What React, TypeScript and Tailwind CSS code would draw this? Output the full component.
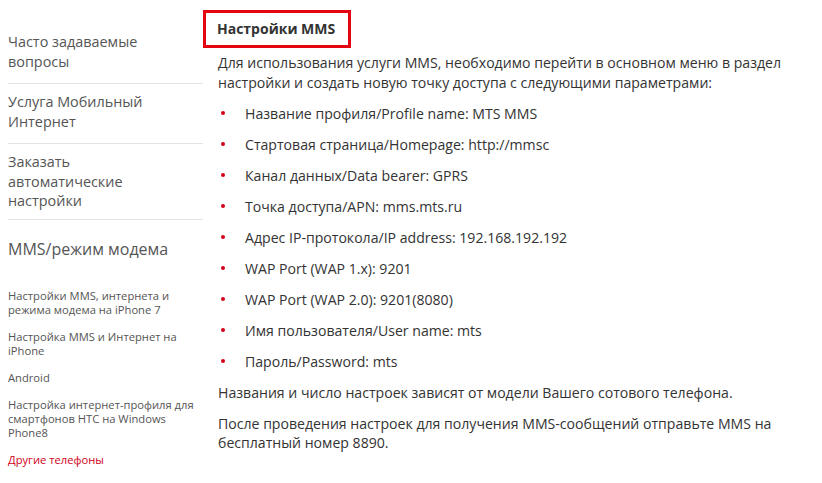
import React from 'react';

const sideItems = [
  ['Часто задаваемые', 'вопросы'],
  ['Услуга Мобильный', 'Интернет'],
  ['Заказать', 'автоматические', 'настройки'],
];

const subItems = [
  ['Настройки MMS, интернета и', 'режима модема на iPhone 7'],
  ['Настройка MMS и Интернет на', 'iPhone'],
  ['Android'],
  ['Настройка интернет-профиля для', 'смартфонов HTC на Windows', 'Phone8'],
];

const params = [
  'Название профиля/Profile name: MTS MMS',
  'Стартовая страница/Homepage: http://mmsc',
  'Канал данных/Data bearer: GPRS',
  'Точка доступа/APN: mms.mts.ru',
  'Адрес IP-протокола/IP address: 192.168.192.192',
  'WAP Port (WAP 1.x): 9201',
  'WAP Port (WAP 2.0): 9201(8080)',
  'Имя пользователя/User name: mts',
  'Пароль/Password: mts',
];

export default function App() {
  return (
    <div className="flex min-h-screen bg-white font-['Open_Sans','Noto_Sans',sans-serif] text-[#333]">
      <aside className="ml-2 w-[195px] shrink-0 pt-[24px] text-[14.4px] leading-[19.5px] text-[#555]">
        {sideItems.map((lines, i) => (
          <div
            key={i}
            className={`border-b border-[#e3e3e3] pt-2 ${i === 2 ? 'pb-2' : 'pb-3'}`}
          >
            {lines.map((l) => (
              <div key={l}>{l}</div>
            ))}
          </div>
        ))}
        <div className="pt-[18px] text-[16px] leading-[22px] text-[#555]">MMS/режим модема</div>
        <div className="mt-[29px] flex flex-col gap-[13px] text-[11.2px] leading-[14px]">
          {subItems.map((lines, i) => (
            <div key={i}>
              {lines.map((l) => (
                <div key={l}>{l}</div>
              ))}
            </div>
          ))}
          <div className="text-[#d0021b]">Другие телефоны</div>
        </div>
      </aside>

      <main className="flex-1 pt-[10px]">
        <div className="w-[148px] border-[3px] border-[#e30611] py-[6px] pl-[11px] text-[14px] font-bold leading-[20px] text-[#333]">
          Настройки MMS
        </div>
        <div className="mt-[5px] flex flex-col gap-[11.5px] pl-[15px] text-[14.1px] leading-[19.5px]">
          <p>
            Для использования услуги MMS, необходимо перейти в основном меню в раздел
            <br />
            настройки и создать новую точку доступа с следующими параметрами:
          </p>
          <ul className="flex flex-col gap-[11.5px]">
            {params.map((p) => (
              <li key={p} className="flex items-center">
                <span className="ml-[3px] mr-[20px] h-[4px] w-[4px] shrink-0 rounded-full bg-[#d3001b]" />
                <span>{p}</span>
              </li>
            ))}
          </ul>
          <p>Названия и число настроек зависят от модели Вашего сотового телефона.</p>
          <p>
            После проведения настроек для получения MMS-сообщений отправьте MMS на
            <br />
            бесплатный номер 8890.
          </p>
        </div>
      </main>
    </div>
  );
}
